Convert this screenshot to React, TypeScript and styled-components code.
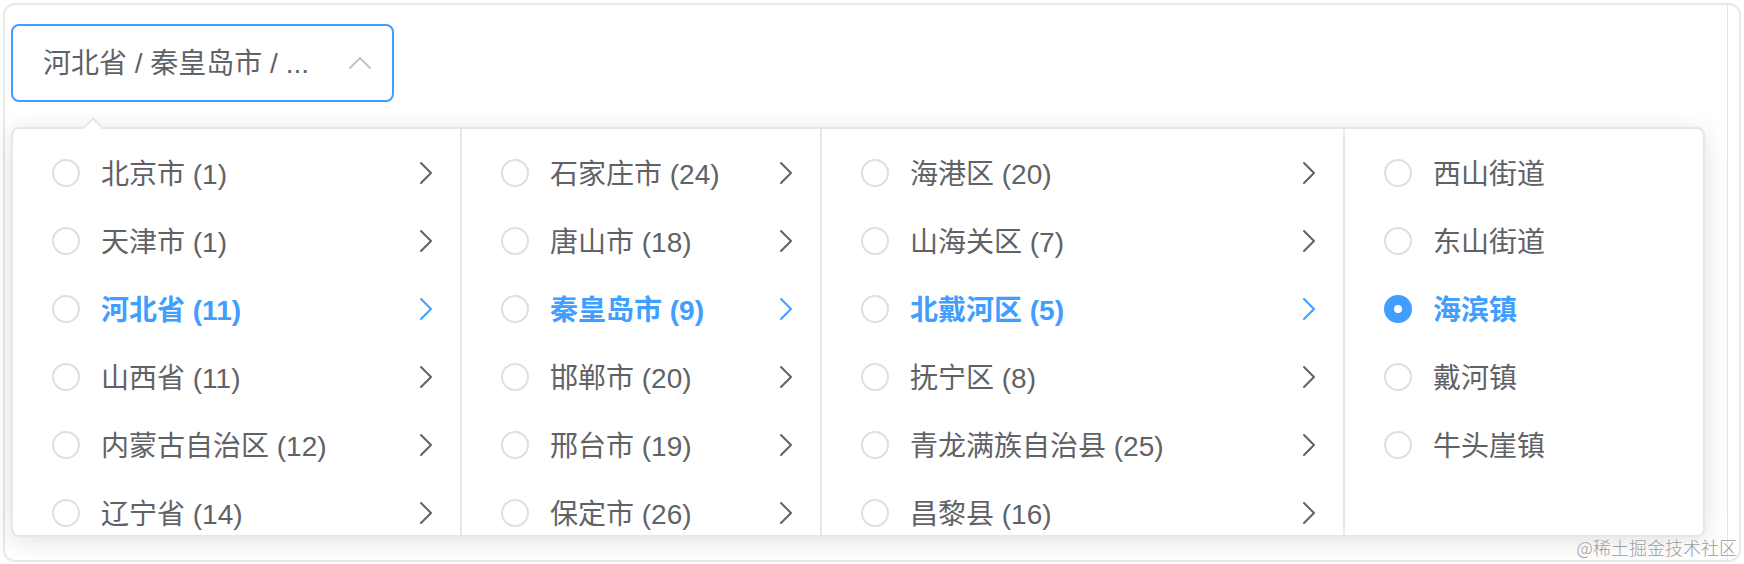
import React from "react";
import styled, { createGlobalStyle } from "styled-components";

const GlobalStyle = createGlobalStyle`
  html, body {
    margin: 0;
    padding: 0;
    background: #ffffff;
  }
  body {
    font-family: "Liberation Sans", "Noto Sans CJK SC", sans-serif;
    -webkit-font-smoothing: antialiased;
  }
  * { box-sizing: border-box; }
`;

const Card = styled.div`
  position: relative;
  margin: 3px;
  width: 1738px;
  height: 559px;
  border: 2px solid #e8e8e8;
  border-radius: 12px;
  padding: 0 11px 0 0;
  display: flex;
  background: #fff;
`;

const Stage = styled.div`
  flex: 1;
  border-right: 1px solid #d6e6f9;
  padding: 19px 0 0 6px;
  display: flex;
  flex-direction: column;
  align-items: flex-start;
`;

const Trigger = styled.div`
  width: 383px;
  height: 78px;
  border: 2px solid #409eff;
  border-radius: 8px;
  display: flex;
  align-items: center;
  justify-content: space-between;
  padding: 0 18px 0 30px;
  background: #fff;
`;

const TriggerText = styled.span`
  font-size: 28px;
  color: #606266;
  white-space: nowrap;
  line-height: 1;
  padding-top: 2px;
`;

const Dropdown = styled.div`
  position: relative;
  margin-top: 25px;
  width: 1694px;
  height: 410px;
  border: 2px solid #e4e7ed;
  border-radius: 8px;
  background: #fff;
  box-shadow: 0 4px 24px rgba(0, 0, 0, 0.12);
  display: flex;
`;

const Arrow = styled.div`
  position: absolute;
  top: -9px;
  left: 73px;
  width: 14px;
  height: 14px;
  background: #fff;
  border-top: 2px solid #e4e7ed;
  border-left: 2px solid #e4e7ed;
  transform: rotate(45deg);
  z-index: 2;
`;

const Menu = styled.div<{ $width: number; $last?: boolean }>`
  width: ${(p) => p.$width}px;
  flex: none;
  height: 100%;
  overflow: hidden;
  padding-top: 10px;
  border-right: ${(p) => (p.$last ? "none" : "2px solid #e4e7ed")};
`;

const Node = styled.div<{ $active?: boolean }>`
  height: 68px;
  display: flex;
  align-items: center;
  padding: 0 20px 0 39px;
  color: ${(p) => (p.$active ? "#409eff" : "#606266")};
  font-weight: ${(p) => (p.$active ? 700 : 400)};
`;

const Radio = styled.span<{ $checked?: boolean }>`
  flex: none;
  width: 28px;
  height: 28px;
  border-radius: 50%;
  border: 2px solid ${(p) => (p.$checked ? "#409eff" : "#dcdfe6")};
  background: ${(p) => (p.$checked ? "#409eff" : "#fff")};
  display: flex;
  align-items: center;
  justify-content: center;
  &::after {
    content: "";
    width: 8px;
    height: 8px;
    border-radius: 50%;
    background: #fff;
    display: ${(p) => (p.$checked ? "block" : "none")};
  }
`;

const Label = styled.span`
  flex: 1;
  padding: 3px 0 0 21px;
  font-size: 28px;
  line-height: 1;
  white-space: nowrap;
`;

const Watermark = styled.span`
  position: absolute;
  right: 2px;
  bottom: 3px;
  font-family: "Noto Sans CJK SC", sans-serif;
  font-size: 18px;
  line-height: 20px;
  font-weight: 300;
  color: #9c9c9c;
  text-shadow: 0 0 2px #fff;
  z-index: 3;
`;

const ChevronRight = ({ color }: { color: string }) => (
  <svg width="28" height="28" viewBox="0 0 28 28" fill="none">
    <path d="M9 4 L19 14 L9 24" stroke={color} strokeWidth="2" strokeLinecap="round" strokeLinejoin="round" />
  </svg>
);

const ChevronUp = () => (
  <svg width="28" height="28" viewBox="0 0 28 28" fill="none">
    <path d="M4 19 L14 9 L24 19" stroke="#c0c4cc" strokeWidth="2" strokeLinecap="round" strokeLinejoin="round" />
  </svg>
);

type Item = { label: string; active?: boolean };

const columns: { width: number; leaf?: boolean; items: Item[] }[] = [
  {
    width: 449,
    items: [
      { label: "北京市 (1)" },
      { label: "天津市 (1)" },
      { label: "河北省 (11)", active: true },
      { label: "山西省 (11)" },
      { label: "内蒙古自治区 (12)" },
      { label: "辽宁省 (14)" },
    ],
  },
  {
    width: 360,
    items: [
      { label: "石家庄市 (24)" },
      { label: "唐山市 (18)" },
      { label: "秦皇岛市 (9)", active: true },
      { label: "邯郸市 (20)" },
      { label: "邢台市 (19)" },
      { label: "保定市 (26)" },
    ],
  },
  {
    width: 523,
    items: [
      { label: "海港区 (20)" },
      { label: "山海关区 (7)" },
      { label: "北戴河区 (5)", active: true },
      { label: "抚宁区 (8)" },
      { label: "青龙满族自治县 (25)" },
      { label: "昌黎县 (16)" },
    ],
  },
  {
    width: 358,
    leaf: true,
    items: [
      { label: "西山街道" },
      { label: "东山街道" },
      { label: "海滨镇", active: true },
      { label: "戴河镇" },
      { label: "牛头崖镇" },
    ],
  },
];

export default function App() {
  return (
    <>
      <GlobalStyle />
      <Card>
        <Stage>
          <Trigger>
            <TriggerText>河北省 / 秦皇岛市 / ...</TriggerText>
            <ChevronUp />
          </Trigger>
          <Dropdown>
            <Arrow />
            {columns.map((col, ci) => (
              <Menu key={ci} $width={col.width} $last={ci === columns.length - 1}>
                {col.items.map((it) => (
                  <Node key={it.label} $active={it.active}>
                    <Radio $checked={col.leaf && it.active} />
                    <Label>{it.label}</Label>
                    {!col.leaf && <ChevronRight color={it.active ? "#409eff" : "#606266"} />}
                  </Node>
                ))}
              </Menu>
            ))}
          </Dropdown>
        </Stage>
        <Watermark>@稀土掘金技术社区</Watermark>
      </Card>
    </>
  );
}
